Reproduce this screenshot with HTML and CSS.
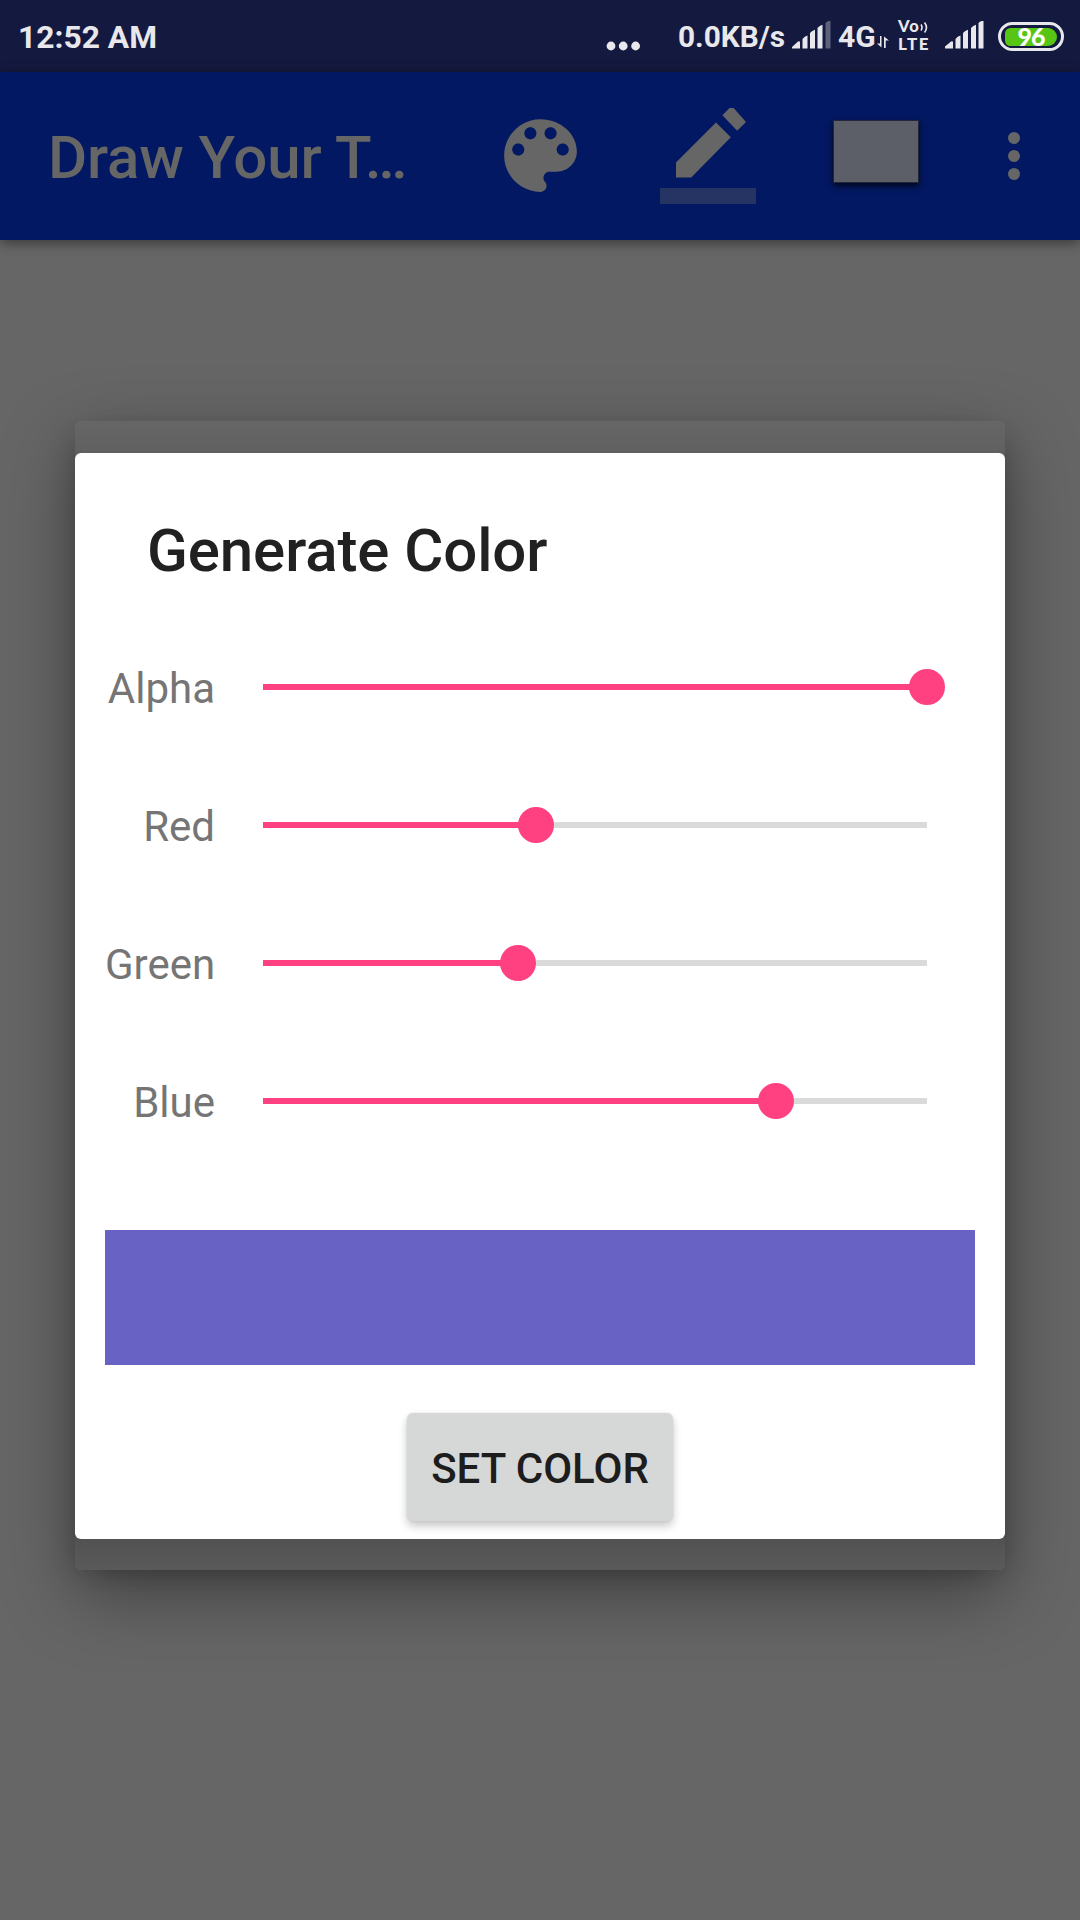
FILE: index.html
```html
<!DOCTYPE html>
<html lang="en">
<head>
<meta charset="utf-8">
<title>Draw Your Thoughts</title>
<link rel="stylesheet" href="styles.css">
</head>
<body>
<div class="screen">
  <header class="status">
    <span class="clock">12:52 AM</span>
    <svg class="more" width="34" height="10" viewBox="0 0 34 10"><circle cx="5" cy="5" r="4.4"/><circle cx="17.2" cy="5" r="4.4"/><circle cx="29.6" cy="5" r="4.4"/></svg>
    <span class="speed">0.0KB/s</span>
    <svg class="signal one" width="40" height="28" viewBox="0 0 40 28"><path d="M0 27.500v-1.500l6-5.500q2-1 2 1v6zM10.500 27.500V18q2-3 5-3.500v13zM18 27.500V12q2-2.500 5-3.300v18.800zM25.500 27.500V7q2-2.500 5-3.300v23.800z"/><path opacity=".35" d="M33.500 27.500V2q2-2 5-2.500v28z"/></svg>
    <span class="net">4G</span>
    <svg class="arrows" width="12" height="12" viewBox="0 0 12 12"><path d="M3 0h1.500v11.500L0 7.500h3zM7 12V.5l5 4H8.700V12z"/></svg>
    <span class="volte"><span class="vo">Vo<svg width="8" height="13" viewBox="0 0 8 13"><path class="wave" d="M1 3.500q2 3 0 6M4.500 1.500q4 5 0 10"/></svg></span><span class="lte">LTE</span></span>
    <svg class="signal two" width="40" height="28" viewBox="0 0 40 28"><path d="M0 27.500v-2l6-5q2-1 2 1v6zM10.500 27.500V18q2-3 5-3.500v13zM18 27.500V12q2-2.500 5-3.300v18.800zM26 27.500V7q2-2.500 5-3.300v23.800zM33.500 27.500V2q2-2 5-2.500v28z"/></svg>
    <span class="battery"><span class="level">96</span></span>
  </header>

  <nav class="toolbar">
    <span class="app-title">Draw Your T…</span>
    <svg class="palette" width="97" height="97" viewBox="0 0 24 24"><path d="M12 3c-4.970 0-9 4.030-9 9s4.030 9 9 9c.83 0 1.500-.67 1.500-1.500 0-.39-.15-.74-.39-1.010-.23-.26-.38-.61-.38-.99 0-.83.67-1.500 1.500-1.500H16c2.760 0 5-2.240 5-5 0-4.420-4.030-8-9-8zm-5.500 9c-.83 0-1.500-.67-1.500-1.500S5.670 9 6.500 9 8 9.670 8 10.500 7.330 12 6.500 12zm3-4C8.670 8 8 7.330 8 6.500S8.670 5 9.500 5s1.500.67 1.500 1.500S10.330 8 9.500 8zm5 0c-.83 0-1.500-.67-1.500-1.500S13.670 5 14.500 5s1.500.67 1.500 1.500S15.330 8 14.500 8zm3 4c-.83 0-1.500-.67-1.500-1.500S16.670 9 17.500 9s1.500.67 1.500 1.500-.67 1.500-1.500 1.500z"/></svg>
    <svg class="pencil" width="96" height="96" viewBox="0 0 24 24"><path d="M4 13.600 14 3.600 17.700 7.300 7.800 17.400H4zM15.600 1.800 17.400 0h1L21.500 3.500 19.300 5.700z"/><path opacity=".36" d="M0 20h24v4H0z"/></svg>
    <span class="swatch"></span>
    <svg class="overflow" width="12" height="48" viewBox="0 0 12 48"><circle cx="6" cy="6" r="6"/><circle cx="6" cy="24" r="6"/><circle cx="6" cy="42" r="6"/></svg>
  </nav>

  <main class="canvas">
    <div class="window">
      <section class="dialog">
        <h1 class="title">Generate Color</h1>
        <div class="row"><span class="label">Alpha</span><div class="track"><div class="fill" style="width:100%"></div></div></div>
        <div class="row"><span class="label">Red</span><div class="track"><div class="fill" style="width:41.1%"></div></div></div>
        <div class="row"><span class="label">Green</span><div class="track"><div class="fill" style="width:38.4%"></div></div></div>
        <div class="row"><span class="label">Blue</span><div class="track"><div class="fill" style="width:77.3%"></div></div></div>
        <div class="preview"></div>
        <button class="set">SET COLOR</button>
      </section>
    </div>
  </main>
</div>
</body>
</html>
```

FILE: styles.css
```css
* { box-sizing: border-box; }
body { margin: 0; font-family: Roboto, sans-serif; }
svg { display: block; flex: none; }
.screen { width: 1080px; height: 1920px; display: flex; flex-direction: column; background: #666; overflow: hidden; }

/* Status bar */
.status { height: 72px; flex: none; display: flex; align-items: flex-start; background: #14193f; color: #e8e8ec; font-weight: 700; white-space: nowrap; }
.status svg { fill: #e8e8ec; }
.clock { width: 141px; margin: 18px 0 0 18px; font-size: 31.800px; line-height: 38px; }
.more { margin: 41px 0 0 447px; }
.speed { width: 108px; margin: 18px 0 0 38px; font-size: 29.800px; line-height: 38px; }
.signal.one { margin: 21px 0 0 6px; }
.net { width: 37px; margin: 18px 0 0 6px; font-size: 30px; line-height: 38px; }
.arrows { margin: 36px 0 0 2px; }
.volte { width: 34px; margin: 18px 0 0 9px; display: flex; flex-direction: column; font-family: Lato, sans-serif; }
.vo { display: flex; height: 17px; font-size: 16.500px; line-height: 17px; font-weight: 900; letter-spacing: 1px; }
.vo svg { margin-top: 3px; }
.vo .wave { fill: none; stroke: #e8e8ec; stroke-width: 1.600; }
.lte { font-size: 17px; line-height: 17px; font-weight: 900; letter-spacing: 1.500px; }
.signal.two { margin: 21px 0 0 13px; }
.battery { width: 66px; height: 29px; margin: 22px 0 0 13px; padding: 2.500px 4px; border: 3px solid #e8e8ec; border-radius: 15px; display: flex; }
.level { flex: 1; border-radius: 6px 10px 10px 6px; background: #57c514; color: #fff; font: 900 25px/17px Lato, sans-serif; letter-spacing: -1px; text-align: center; }

/* App bar */
.toolbar { height: 168px; flex: none; display: flex; align-items: flex-start; background: #031862; box-shadow: 0 3px 12px rgba(0,0,0,.45); color: #666; }
.toolbar svg { fill: #666; }
.app-title { width: 360px; margin: 51px 0 0 48px; font-size: 60px; line-height: 70px; font-weight: 500; letter-spacing: -.1px; white-space: nowrap; }
.palette { margin: 35px 0 0 84px; }
.pencil { margin: 36px 0 0 71px; }
.swatch { width: 86px; height: 63px; margin: 48px 0 0 77px; border: 1.500px solid #24273c; background: #5d5f68; box-shadow: 0 3px 6px rgba(0,0,0,.75); }
.overflow { margin: 60px 0 0 89px; }

/* Dialog */
.canvas { flex: 1; padding: 181px 75px 0; }
.window { height: 1149px; padding: 32px 0 31px; border-radius: 6px; background: linear-gradient(#666, #606060 32px, #525252 1118px, #5a5a5a); box-shadow: 0 24px 72px rgba(0,0,0,.38), 10px 8px 24px -10px rgba(0,0,0,.16), -10px 8px 24px -10px rgba(0,0,0,.16); }
.dialog { height: 1086px; padding: 63px 30px 0; display: flex; flex-direction: column; align-items: stretch; border-radius: 6px; background: #fff; }
.title { height: 70px; margin: 0 0 32px 42px; font-size: 60px; line-height: 70px; font-weight: 500; letter-spacing: -.1px; color: #212121; }
.row { height: 138px; flex: none; display: flex; align-items: center; }
.label { width: 110px; text-align: right; font-size: 42px; line-height: 50px; padding-top: 3px; color: #757575; }
.track { width: 664px; height: 6px; margin-left: 48px; background: #dadada; }
.fill { height: 6px; background: #ff4081; position: relative; }
.fill::after { content: ""; position: absolute; right: -18px; top: -15px; width: 36px; height: 36px; border-radius: 50%; background: #ff4081; }
.preview { height: 135px; flex: none; margin-top: 60px; background: #6962c5; }
.set { width: 266px; height: 108px; flex: none; align-self: center; margin-top: 48px; padding: 4px 0 0; border: 0; border-radius: 6px; background: #d6d7d7; color: #1d1d1d; font: 500 42px/50px Roboto, sans-serif; box-shadow: 0 5px 8px rgba(0,0,0,.22), 0 0 3px rgba(0,0,0,.08); }
```
